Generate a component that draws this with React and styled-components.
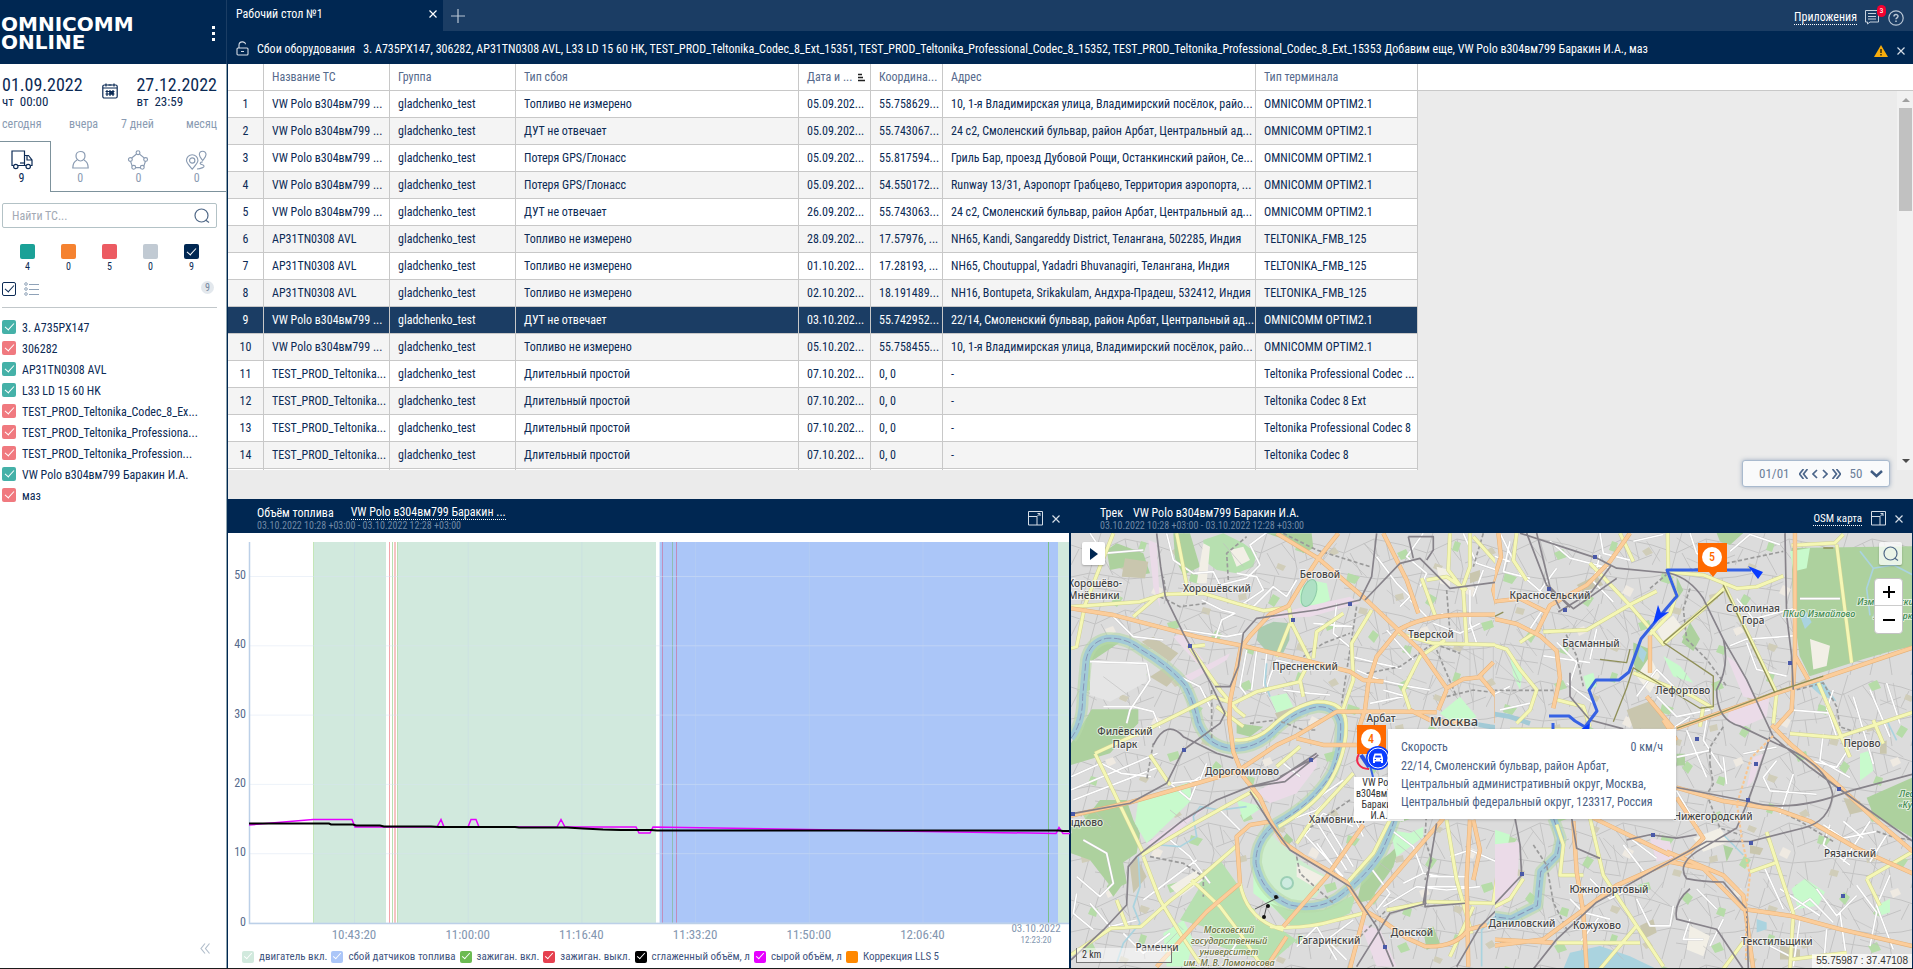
import { useState } from "react";
import styled, { createGlobalStyle, css } from "styled-components";

const GlobalStyle = createGlobalStyle`
    :root {
        --navy: #002752;
        --navy-light: #1b3d64;
        --text: #0b2a55;
        --muted: #8a9bb2;
        --slate: #566a8c;
        --line: #c8c8c8;
    }

    * {
        box-sizing: border-box;
    }

    body {
        margin: 0;
        background-color: #ffffff;
        color: var(--text);
        font-family: "Roboto Condensed", "Liberation Sans", sans-serif;
        font-size: 12px;
        line-height: 16px;
    }

    button, input, select {
        font: inherit;
        color: inherit;
        margin: 0;
        padding: 0;
    }

    button {
        border: none;
        background: none;
        cursor: pointer;
    }

    svg {
        display: block;
        flex: none;
    }
`;

/* ---------- layout ---------- */

const Page = styled.div`
    display: grid;
    grid-template-columns: 228px minmax(0, 1fr);
    height: 100vh;
    border-bottom: 1px solid #1c1c1c;
`;

const Main = styled.main`
    display: flex;
    flex-direction: column;
    min-width: 0;
    min-height: 0;
`;

const Workspace = styled.div`
    flex: 1;
    display: grid;
    grid-template-rows: 468fr 469fr;
    min-height: 0;
`;

const BottomRow = styled.div`
    display: grid;
    grid-template-columns: minmax(0, 1fr) minmax(0, 1fr);
    gap: 2px;
    padding-right: 1px;
    background-color: var(--navy);
    min-height: 0;
`;

/* ---------- sidebar ---------- */

const Sidebar = styled.aside`
    display: flex;
    flex-direction: column;
    border-right: 1px solid var(--navy);
    box-shadow: inset -1px 0 0 #8ea3ad;
`;

const Brand = styled.header`
    display: flex;
    align-items: center;
    justify-content: space-between;
    height: 64px;
    padding: 2px 6px 0 1px;
    background-color: var(--navy);
    border-right: 1px solid var(--navy-light);
    color: #ffffff;
`;

const BrandName = styled.h1`
    margin: 0;
    font-family: "DejaVu Sans", sans-serif;
    font-size: 20px;
    line-height: 18px;
    font-weight: 700;
`;

const MenuButton = styled.button`
    padding: 4px;
`;

const Period = styled.div`
    display: flex;
    justify-content: space-between;
    align-items: flex-start;
    padding: 11px 10px 0 2px;
`;

const PeriodDate = styled.button`
    font-size: 18px;
    line-height: 20px;
    text-align: left;

    & span {
        display: block;
        font-size: 13px;
        line-height: 14px;
    }
`;

const CalendarButton = styled.button`
    margin-top: 8px;
`;

const QuickPeriods = styled.div`
    display: grid;
    grid-template-columns: 67px 52px 1fr auto;
    justify-items: start;
    padding: 7px 10px 9px 2px;
    color: var(--muted);
    line-height: 16px;
`;

const Tabs = styled.div`
    display: grid;
    grid-template-columns: 51px repeat(3, 1fr);
    height: 51px;
    margin-right: 1px;
`;

const Tab = styled.button`
    display: flex;
    flex-direction: column;
    align-items: center;
    padding-top: 9px;
    color: var(--muted);
    border-bottom: 1px solid #7d929c;

    ${(p) => p.$active && css`
        padding: 8px 7px 0 0;
        color: var(--text);
        border-top: 1px solid #7d929c;
        border-right: 1px solid #7d929c;
        border-bottom: none;
    `}
`;

const SearchBox = styled.label`
    display: flex;
    align-items: center;
    height: 25px;
    margin: 11px 10px 16px 2px;
    padding: 0 6px 0 9px;
    border: 1px solid #b3c2c6;
    border-radius: 2px;
    color: #4f6887;

    & input {
        flex: 1;
        min-width: 0;
        border: none;
        outline: none;
        background: none;
    }

    & input::placeholder {
        color: #a3aab5;
    }
`;

const Statuses = styled.div`
    display: flex;
    justify-content: space-between;
    padding: 0 28px 0 20px;
`;

const Status = styled.label`
    display: flex;
    flex-direction: column;
    align-items: center;
    width: 15px;
    font-size: 10px;
    line-height: 16px;
`;

const Check = styled.input`
    appearance: none;
    flex: none;
    position: relative;
    width: ${(p) => p.$size || 14}px;
    height: ${(p) => p.$size || 14}px;
    border-radius: 2px;
    border: ${(p) => (p.$outlined ? "1px solid var(--text)" : "none")};
    background-color: ${(p) => p.$color};

    &:checked::after {
        content: "";
        position: absolute;
        inset: 0;
        margin: auto;
        top: -3px;
        width: ${(p) => (p.$size === 12 ? 3 : 4)}px;
        height: ${(p) => (p.$size === 12 ? 7 : 8)}px;
        border: solid ${(p) => (p.$outlined ? "var(--text)" : "#ffffff")};
        border-width: 0 1px 1px 0;
        transform: rotate(42deg);
    }
`;

const ListTools = styled.div`
    display: flex;
    align-items: center;
    gap: 8px;
    margin: 7px 10px 0 2px;
    padding-bottom: 11px;
    border-bottom: 1px solid #c1c7ca;
`;

const Total = styled.span`
    margin: -3px 3px 0 auto;
    width: 13px;
    height: 13px;
    border-radius: 50%;
    background-color: #e3e8ed;
    color: #7487a0;
    font-size: 10px;
    line-height: 13px;
    text-align: center;
`;

const Vehicles = styled.ul`
    list-style: none;
    margin: 0;
    padding: 8px 10px 0 2px;
    flex: 1;
`;

const Vehicle = styled.li`
    & label {
        display: flex;
        align-items: center;
        gap: 6px;
        height: 21px;
        white-space: nowrap;
    }

    & span {
        padding-top: 2px;
    }
`;

const Collapse = styled.button`
    align-self: flex-end;
    margin: 0 17px 14px 0;
    color: #b3bfcc;
`;

/* ---------- desktop tabs ---------- */

const TabBar = styled.div`
    display: flex;
    align-items: center;
    height: 31px;
    background-color: var(--navy-light);
    color: #ffffff;
`;

const DesktopTab = styled.div`
    display: flex;
    align-items: center;
    justify-content: space-between;
    align-self: stretch;
    width: 215px;
    padding: 0 6px 4px 8px;
    background-color: var(--navy);
`;

const AddButton = styled.button`
    margin-left: 8px;
    color: #b9c6d4;
`;

const TopTools = styled.div`
    display: flex;
    align-items: center;
    gap: 8px;
    margin-left: auto;
    padding: 4px 9px 0 0;
`;

const DottedLink = styled.a`
    color: #ffffff;
    font-size: ${(p) => (p.$small ? 11 : 12)}px;
    line-height: 13px;
    text-decoration: none;
    border-bottom: 1px dotted #ffffff;
`;

const Messages = styled.button`
    position: relative;
    color: #c5d0dc;
`;

const Badge = styled.span`
    position: absolute;
    top: -5px;
    right: -6px;
    width: 9px;
    height: 12px;
    border-radius: 5px;
    background-color: #f4002f;
    color: #ffffff;
    font-size: 8px;
    line-height: 12px;
    text-align: center;
`;

/* ---------- widgets ---------- */

const Widget = styled.section`
    display: flex;
    flex-direction: column;
    min-width: 0;
    min-height: 0;
    background-color: ${(p) => p.$background || "#ffffff"};
`;

const WidgetHeader = styled.header`
    display: flex;
    align-items: center;
    gap: 8px;
    height: ${(p) => p.$height}px;
    padding: ${(p) => p.$padding};
    background-color: var(--navy);
    color: #ffffff;
    white-space: nowrap;
`;

const WidgetName = styled.h2`
    margin: 0;
    font-size: 12px;
    line-height: 16px;
    font-weight: 400;
`;

const WidgetTools = styled.div`
    display: flex;
    align-items: center;
    gap: 9px;
    margin-left: auto;
    padding-top: 5px;
    color: #d5dde6;
`;

const TitleBlock = styled.div`
    padding-top: 6px;
`;

const TitleLine = styled.div`
    display: flex;
    align-items: center;
    gap: ${(p) => p.$gap}px;
    height: 14px;
`;

const Interval = styled.div`
    color: #7089a5;
    font-size: 10px;
    line-height: 12px;
`;

const TableArea = styled.div`
    position: relative;
    flex: 1;
    min-height: 0;
    overflow: hidden;
`;

const Table = styled.table`
    width: 100%;
    table-layout: fixed;
    border-collapse: separate;
    border-spacing: 0;

    & th, & td {
        height: 27px;
        padding: 0 0 0 8px;
        border-right: 1px solid var(--line);
        border-bottom: 1px solid var(--line);
        text-align: left;
        font-weight: 400;
        white-space: nowrap;
        overflow: hidden;
    }

    & th {
        background-color: #ffffff;
        color: var(--slate);
    }

    & th:first-child, & td:first-child {
        padding: 0;
        text-align: center;
    }

    & th:last-child {
        border-right: none;
    }

    & td:last-child {
        border: none;
        background-color: #ebebeb;
    }
`;

const Row = styled.tr`
    background-color: ${(p) => (p.$striped ? "#f4f4f4" : "#ffffff")};

    ${(p) => p.$selected && css`
        background-color: var(--navy-light);
        color: #ffffff;
    `}
`;

const SortHead = styled.div`
    display: flex;
    align-items: center;
    gap: 6px;
`;

const Scrollbar = styled.div`
    position: absolute;
    top: 27px;
    right: 0;
    bottom: 0;
    width: 16px;
    display: flex;
    flex-direction: column;
    align-items: center;
    padding: 7px 1px 7px 2px;
    background-color: #f1f1f1;
    color: #4d4d4d;
`;

const Thumb = styled.div`
    width: 13px;
    height: 103px;
    margin: 6px 0 auto;
    background-color: #c1c1c1;
`;

const TableFooter = styled.footer`
    position: relative;
    height: 29px;
    background-color: #ebebeb;
`;

const Pager = styled.div`
    position: absolute;
    right: 23px;
    bottom: 12px;
    display: flex;
    align-items: center;
    width: 148px;
    height: 27px;
    padding: 0 6px 0 16px;
    border: 1px solid #a9bace;
    border-radius: 3px;
    background-color: #f9fafb;
    box-shadow: 0 0 4px rgba(80, 110, 150, 0.5);
    color: #6c7f99;
    font-size: 13px;
`;

const PagerArrows = styled.div`
    display: flex;
    gap: 4px;
    margin: 1px 9px 0 9px;
    color: #4a658a;
`;

const PageSize = styled.label`
    display: flex;
    align-items: center;
    flex: 1;

    & select {
        appearance: none;
        flex: 1;
        border: none;
        background: none;
        outline: none;
    }
`;

/* ---------- chart ---------- */

const ChartSvg = styled.svg`
    flex: 1;
    width: 100%;
    min-height: 0;
    overflow: visible;
    font-family: "Roboto Condensed", sans-serif;
`;

const Legend = styled.div`
    display: flex;
    align-items: center;
    gap: 4px;
    height: 25px;
    padding: 2px 0 0 14px;
    overflow: hidden;
    white-space: nowrap;
    color: #3f5580;
    font-size: 11px;

    & label {
        display: flex;
        align-items: center;
        gap: 5px;
    }
`;

/* ---------- map ---------- */

const MapArea = styled.div`
    position: relative;
    flex: 1;
    min-height: 0;
    overflow: hidden;
    background-color: #dcdcdc;
`;

const MapSvg = styled.svg`
    width: 100%;
    height: 100%;
    font-family: "Noto Sans", sans-serif;
`;

const MapButton = styled.button`
    position: absolute;
    top: 9px;
    left: ${(p) => p.$left || "auto"};
    right: ${(p) => p.$right || "auto"};
    display: flex;
    align-items: center;
    justify-content: center;
    width: 23px;
    height: 23px;
    border-radius: 2px;
    background-color: rgba(255, 255, 255, ${(p) => p.$alpha || 1});
    box-shadow: 0 1px 2px rgba(0, 0, 0, 0.25);
    color: var(--navy);
`;

const ZoomControl = styled.div`
    position: absolute;
    top: 45px;
    right: 9px;
    border: 1px solid #c3c3c3;
    border-radius: 4px;
    background-color: #ffffff;

    & button {
        display: flex;
        align-items: center;
        justify-content: center;
        width: 27px;
        height: 27px;
        color: #000000;
    }

    & button:first-child {
        border-bottom: 1px solid #cccccc;
    }
`;

const MapScale = styled.div`
    position: absolute;
    left: 5px;
    bottom: 5px;
    width: 96px;
    height: 15px;
    padding-left: 5px;
    border: 1px solid #777777;
    border-top: none;
    background-color: rgba(255, 255, 255, 0.5);
    color: #333333;
    font-size: 10px;
    line-height: 13px;
`;

const Coordinates = styled.div`
    position: absolute;
    right: 0;
    bottom: 0;
    padding: 0 4px;
    background-color: rgba(255, 255, 255, 0.7);
    color: #333333;
    font-family: "Liberation Sans", sans-serif;
    font-size: 10px;
    line-height: 14px;
`;

const VehicleTag = styled.div`
    position: absolute;
    left: 283px;
    top: 244px;
    width: 50px;
    padding: 0;
    background-color: #ffffff;
    color: #333333;
    font-size: 10px;
    line-height: 11px;
    text-align: center;
`;

const Popup = styled.div`
    position: absolute;
    left: 317px;
    top: 196px;
    width: 288px;
    height: 90px;
    padding: 9px 13px 0 13px;
    background-color: #ffffff;
    box-shadow: 0 1px 3px rgba(0, 0, 0, 0.2);
    color: #4b5f85;
    line-height: 18px;

    & p {
        margin: 0;
        white-space: nowrap;
    }
`;

const PopupHead = styled.div`
    display: flex;
    justify-content: space-between;
    margin-bottom: 1px;
`;

/* ---------- data ---------- */

const teal = "#45b1a8";
const red = "#f0797f";

const vehicles = [
    ["3. A735PX147", teal],
    ["306282", red],
    ["AP31TN0308 AVL", teal],
    ["L33 LD 15 60 HK", teal],
    ["TEST_PROD_Teltonika_Codec_8_Ex...", red],
    ["TEST_PROD_Teltonika_Professiona...", red],
    ["TEST_PROD_Teltonika_Profession...", red],
    ["VW Polo в304вм799 Баракин И.А.", teal],
    ["маз", red],
];

const statuses = [
    ["#1ba197", 4],
    ["#f58230", 0],
    ["#ec5b62", 5],
    ["#c1cad3", 0],
    ["#002752", 9],
];

const columns = [36, 126, 126, 283, 72, 72, 313, 162];

const polo = "VW Polo в304вм799 ...";
const avl = "AP31TN0308 AVL";
const testProd = "TEST_PROD_Teltonika...";
const noFuel = "Топливо не измерено";
const noSensor = "ДУТ не отвечает";
const noGps = "Потеря GPS/Глонасс";
const idle = "Длительный простой";

const rows = [
    [polo, noFuel, "05.09.202...", "55.758629...", "10, 1-я Владимирская улица, Владимирский посёлок, райо...", "OMNICOMM OPTIM2.1"],
    [polo, noSensor, "05.09.202...", "55.743067...", "24 с2, Смоленский бульвар, район Арбат, Центральный ад...", "OMNICOMM OPTIM2.1"],
    [polo, noGps, "05.09.202...", "55.817594...", "Гриль Бар, проезд Дубовой Рощи, Останкинский район, Се...", "OMNICOMM OPTIM2.1"],
    [polo, noGps, "05.09.202...", "54.550172...", "Runway 13/31, Аэропорт Грабцево, Территория аэропорта, ...", "OMNICOMM OPTIM2.1"],
    [polo, noSensor, "26.09.202...", "55.743063...", "24 с2, Смоленский бульвар, район Арбат, Центральный ад...", "OMNICOMM OPTIM2.1"],
    [avl, noFuel, "28.09.202...", "17.57976, ...", "NH65, Kandi, Sangareddy District, Телангана, 502285, Индия", "TELTONIKA_FMB_125"],
    [avl, noFuel, "01.10.202...", "17.28193, ...", "NH65, Choutuppal, Yadadri Bhuvanagiri, Телангана, Индия", "TELTONIKA_FMB_125"],
    [avl, noFuel, "02.10.202...", "18.191489...", "NH16, Bontupeta, Srikakulam, Андхра-Прадеш, 532412, Индия", "TELTONIKA_FMB_125"],
    [polo, noSensor, "03.10.202...", "55.742952...", "22/14, Смоленский бульвар, район Арбат, Центральный ад...", "OMNICOMM OPTIM2.1"],
    [polo, noFuel, "05.10.202...", "55.758455...", "10, 1-я Владимирская улица, Владимирский посёлок, райо...", "OMNICOMM OPTIM2.1"],
    [testProd, idle, "07.10.202...", "0, 0", "-", "Teltonika Professional Codec ..."],
    [testProd, idle, "07.10.202...", "0, 0", "-", "Teltonika Codec 8 Ext"],
    [testProd, idle, "07.10.202...", "0, 0", "-", "Teltonika Professional Codec 8"],
    [testProd, idle, "07.10.202...", "0, 0", "-", "Teltonika Codec 8"],
];

const legend = [
    ["двигатель вкл.", "#d1e9dd", true],
    ["сбой датчиков топлива", "#abc6f8", true],
    ["зажиган. вкл.", "#6cbb52", true],
    ["зажиган. выкл.", "#e5404f", true],
    ["сглаженный объём, л", "#000000", true],
    ["сырой объём, л", "#e600ff", true],
    ["Коррекция LLS 5", "#ff8800", false],
];

/* ---------- icons ---------- */

const CloseIcon = ({ size = 8 }) => (
    <svg width={size} height={size} viewBox="0 0 8 8" fill="none" stroke="currentColor" strokeWidth="1.2">
        <path d="M.5.5l7 7M7.5.5l-7 7" />
    </svg>
);

const ExpandIcon = () => (
    <svg width="15" height="15" viewBox="0 0 15 15" fill="none" stroke="currentColor">
        <path d="M.5 .5h14v13.500h-14zM.5 5.500h8.500v8.500" />
        <path d="M9 5.500l3-3M9.500 2.500h2.500v2.500" />
    </svg>
);

const SearchIcon = ({ size = 16 }) => (
    <svg width={size} height={size} viewBox="0 0 16 16" fill="none" stroke="#4f6887" strokeWidth="1.2">
        <circle cx="7.500" cy="7.500" r="6.500" />
        <path d="M11.500 12l3.500 2.500" />
    </svg>
);

const CalendarIcon = () => (
    <svg width="16" height="16" viewBox="0 0 16 16" fill="none" stroke="currentColor" strokeWidth="1.200">
        <rect x=".8" y="2" width="14.400" height="13" rx="1.500" />
        <path d="M4 .5v3M12 .5v3M1 5h14M6.500 2h3" />
        <path d="M3.500 8.500h9M3.500 11h9M5 7v6M8 7v6M11 7v6" />
        <path d="M8 8.500h3V11H8z" fill="currentColor" />
    </svg>
);

const TruckIcon = () => (
    <svg width="22" height="20" viewBox="0 0 22 20" fill="none" stroke="currentColor" strokeWidth="1.200">
        <path d="M2.500 15.500H1V1h12.500v14.500H7" />
        <path d="M13.500 5.500h4l3.500 4.500v5.500h-1.500M13.500 15.500h1.500M16 6v4h5" />
        <circle cx="4.800" cy="16.500" r="2.200" />
        <circle cx="17.200" cy="16.500" r="2.200" />
        <path d="M9 13h4" />
    </svg>
);

const PersonIcon = () => (
    <svg width="17" height="20" viewBox="0 0 17 20" fill="none" stroke="currentColor" strokeWidth="1.200">
        <path d="M8.500 1.500c3 0 4.500 2 4.500 4.500s-1.800 5-4.500 5S4 8.500 4 6s1.500-4.500 4.500-4.500z" />
        <path d="M5 10c-3 1.500-4.200 4-4.200 8h15.400c0-4-1.200-6.500-4.200-8" />
    </svg>
);

const NetworkIcon = () => (
    <svg width="22" height="20" viewBox="0 0 22 21" fill="#ffffff" stroke="currentColor" strokeWidth="1.200">
        <path d="M11 3l8.500 7-3 8.500h-11L2.500 10z" />
        <circle cx="11" cy="2.800" r="2" />
        <circle cx="19" cy="10" r="2" />
        <circle cx="3" cy="10" r="2" />
        <circle cx="6.500" cy="18.200" r="2" />
        <circle cx="15.500" cy="18.200" r="2" />
    </svg>
);

const RouteIcon = () => (
    <svg width="23" height="20" viewBox="0 0 23 21" fill="none" stroke="currentColor" strokeWidth="1.200">
        <path d="M7 20C3.500 16 1 13.500 1 11a6 6 0 0 1 12 0c0 2.500-2.500 5-6 9z" />
        <circle cx="7" cy="11" r="2.800" />
        <path d="M18 11c-2-2.500-3.500-4-3.500-6.200a3.500 3.500 0 0 1 7 0C21.500 7 20 8.500 18 11z" />
        <path d="M18 12.500c-3 .5-3.500 2-1 2.800s3.500 2 1 3.200-4 1.500-6 1.500" />
    </svg>
);

const ListIcon = () => (
    <svg width="15" height="14" viewBox="0 0 15 14" fill="none" stroke="#8fa2b8">
        <circle cx="2" cy="2" r="1.300" />
        <circle cx="2" cy="7" r="1.300" />
        <circle cx="2" cy="12" r="1.300" />
        <path d="M5 2.500h10M5 7.500h10M5 12.500h10" />
    </svg>
);

const LockIcon = () => (
    <svg width="13" height="15" viewBox="0 0 13 15" fill="none" stroke="#d5dde6" strokeWidth="1.100">
        <rect x="1" y="7" width="11" height="7" rx="1" />
        <path d="M3 7V4c0-4 6.500-4 6.500-.8M5 10.500h3" />
    </svg>
);

const DotsIcon = () => (
    <svg width="4" height="17" viewBox="0 0 4 17" fill="currentColor">
        <path d="M0 1h3v3H0zM0 7h3v3H0zM0 13h3v3H0z" />
    </svg>
);

const Chevrons = ({ d, wide }) => (
    <svg width={wide ? 9 : 6} height="10" viewBox={wide ? "0 0 9 10" : "0 0 6 10"} fill="none" stroke="currentColor" strokeWidth="1.700">
        <path d={d} />
    </svg>
);

/* ---------- parts ---------- */

const SidePanel = () => {
    const [query, setQuery] = useState("");

    return (
        <Sidebar>
            <Brand>
                <BrandName>OMNICOMM<br />ONLINE</BrandName>
                <MenuButton aria-label="Меню"><DotsIcon /></MenuButton>
            </Brand>

            <Period>
                <PeriodDate>01.09.2022<span>чт&nbsp; 00:00</span></PeriodDate>
                <CalendarButton aria-label="Календарь"><CalendarIcon /></CalendarButton>
                <PeriodDate>27.12.2022<span>вт&nbsp; 23:59</span></PeriodDate>
            </Period>
            <QuickPeriods>
                <button>сегодня</button>
                <button>вчера</button>
                <button>7 дней</button>
                <button>месяц</button>
            </QuickPeriods>

            <Tabs>
                <Tab $active><TruckIcon />9</Tab>
                <Tab><PersonIcon />0</Tab>
                <Tab><NetworkIcon />0</Tab>
                <Tab><RouteIcon />0</Tab>
            </Tabs>

            <SearchBox>
                <input
                    aria-label="Найти ТС"
                    placeholder="Найти ТС..."
                    value={query}
                    onChange={(e) => setQuery(e.target.value)}
                />
                <SearchIcon />
            </SearchBox>

            <Statuses>
                {statuses.map(([color, count], i) => (
                    <Status key={color}>
                        <Check type="checkbox" $size={15} $color={color} defaultChecked={i === 4} />
                        {count}
                    </Status>
                ))}
            </Statuses>

            <ListTools>
                <Check type="checkbox" aria-label="Выбрать все" $outlined $color="#ffffff" defaultChecked />
                <ListIcon />
                <Total>9</Total>
            </ListTools>

            <Vehicles>
                {vehicles.map(([name, color]) => (
                    <Vehicle key={name}>
                        <label>
                            <Check type="checkbox" $color={color} defaultChecked />
                            <span>{name}</span>
                        </label>
                    </Vehicle>
                ))}
            </Vehicles>

            <Collapse aria-label="Свернуть">
                <svg width="10" height="11" viewBox="0 0 10 11" fill="none" stroke="currentColor" strokeWidth="1.200">
                    <path d="M5 .5l-4 5 4 5M9.500 .5l-4 5 4 5" />
                </svg>
            </Collapse>
        </Sidebar>
    );
};

const DesktopTabs = () => (
    <TabBar>
        <DesktopTab>
            Рабочий стол №1
            <button aria-label="Закрыть вкладку"><CloseIcon /></button>
        </DesktopTab>
        <AddButton aria-label="Добавить вкладку">
            <svg width="14" height="14" viewBox="0 0 14 14" stroke="currentColor" strokeWidth="1.200">
                <path d="M7 0v14M0 7h14" />
            </svg>
        </AddButton>
        <TopTools>
            <DottedLink href="#apps">Приложения</DottedLink>
            <Messages aria-label="Сообщения">
                <svg width="15" height="15" viewBox="0 0 15 15" fill="none" stroke="currentColor">
                    <path d="M.500 .500h13v11.500H5L2.500 14v-2h-2z" />
                    <path d="M3 3.500h8M3 6.500h8M3 9h8" />
                </svg>
                <Badge>3</Badge>
            </Messages>
            <button aria-label="Справка">
                <svg width="16" height="16" viewBox="0 0 16 16" fill="none" stroke="#b9c6d4" strokeWidth="1.200">
                    <circle cx="8" cy="8" r="7.200" />
                    <path d="M6 6.500C6 4 10 4 10 6.300 10 7.800 8 7.800 8 9.300M8 10.500v1.400" strokeWidth="1.500" />
                </svg>
            </button>
        </TopTools>
    </TabBar>
);

const FailuresTable = () => (
    <Widget $background="#ebebeb">
        <WidgetHeader $height={33} $padding="2px 8px 0 8px">
            <LockIcon />
            <WidgetName>Сбои оборудования</WidgetName>
            <span>3. A735PX147, 306282, AP31TN0308 AVL, L33 LD 15 60 HK, TEST_PROD_Teltonika_Codec_8_Ext_15351, TEST_PROD_Teltonika_Professional_Codec_8_15352, TEST_PROD_Teltonika_Professional_Codec_8_Ext_15353 Добавим еще, VW Polo в304вм799 Баракин И.А., маз</span>
            <WidgetTools>
                <svg width="14" height="12" viewBox="0 0 14 12">
                    <path d="M7 0l7 12H0z" fill="#f9ad0b" />
                    <path d="M7 4v4M7 9v1.500" stroke="#3a2f10" strokeWidth="1.500" />
                </svg>
                <button aria-label="Закрыть"><CloseIcon /></button>
            </WidgetTools>
        </WidgetHeader>

        <TableArea>
            <Table>
                <colgroup>
                    {columns.map((width, i) => <col key={i} width={width} />)}
                    <col />
                </colgroup>
                <thead>
                    <tr>
                        <th />
                        <th>Название ТС</th>
                        <th>Группа</th>
                        <th>Тип сбоя</th>
                        <th>
                            <SortHead>
                                Дата и ...
                                <svg width="8" height="9" viewBox="0 0 8 9" stroke="#222222" strokeWidth="1.500">
                                    <path d="M0 1.500h4M0 4.500h5M0 7.500h7" />
                                </svg>
                            </SortHead>
                        </th>
                        <th>Координа...</th>
                        <th>Адрес</th>
                        <th>Тип терминала</th>
                        <th />
                    </tr>
                </thead>
                <tbody>
                    {rows.map(([name, failure, date, coords, address, terminal], i) => (
                        <Row key={i} $striped={i % 2 === 1} $selected={i === 8}>
                            <td>{i + 1}</td>
                            <td>{name}</td>
                            <td>gladchenko_test</td>
                            <td>{failure}</td>
                            <td>{date}</td>
                            <td>{coords}</td>
                            <td>{address}</td>
                            <td>{terminal}</td>
                            <td />
                        </Row>
                    ))}
                    <Row>
                        {[...columns, 0].map((_, i) => <td key={i} />)}
                    </Row>
                </tbody>
            </Table>
            <Scrollbar>
                <svg width="8" height="4" viewBox="0 0 8 4" fill="#a0a0a0"><path d="M4 0l4 4H0z" /></svg>
                <Thumb />
                <svg width="8" height="4" viewBox="0 0 8 4" fill="currentColor"><path d="M4 4L0 0h8z" /></svg>
            </Scrollbar>
        </TableArea>

        <TableFooter>
            <Pager>
                01/01
                <PagerArrows>
                    <button aria-label="В начало"><Chevrons wide d="M4.500 0l-4 5 4 5M8.500 0l-4 5 4 5" /></button>
                    <button aria-label="Назад"><Chevrons d="M5 1L1 5l4 4" /></button>
                    <button aria-label="Вперёд"><Chevrons d="M1 1l4 4-4 4" /></button>
                    <button aria-label="В конец"><Chevrons wide d="M.500 0l4 5-4 5M4.500 0l4 5-4 5" /></button>
                </PagerArrows>
                <PageSize>
                    <select aria-label="Строк на странице" defaultValue="50">
                        <option>50</option>
                    </select>
                    <svg width="13" height="8" viewBox="0 0 13 8" fill="none" stroke="#3f5b82" strokeWidth="2.500">
                        <path d="M1 1l5.500 5L12 1" />
                    </svg>
                </PageSize>
            </Pager>
        </TableFooter>
    </Widget>
);

const plot = { left: 21, right: 841, top: 9, bottom: 390 };

const bands = [
    { x: 85, width: 73, color: "#d1e9dd" },
    { x: 169, width: 259, color: "#d1e9dd" },
    { x: 431, width: 1, color: "#dfe9fb" },
    { x: 432, width: 398, color: "#abc6f8" },
    { x: 830, width: 11, color: "#d1e9dd" },
];

const events = [
    [85, "#c4e6b8"],
    [161, "#f3a3a8"],
    [164, "#b6dfb0"],
    [166, "#f6c3c3"],
    [167, "#f6c3c3"],
    [169, "#b9deb2"],
    [434, "#c08fbd"],
    [444, "#8fbdb3"],
    [448, "#c18cb9"],
    [820, "#7cc08a"],
];

const FuelChart = () => (
    <Widget>
        <WidgetHeader $height={34} $padding="0 9px 0 29px">
            <TitleBlock>
                <TitleLine $gap={17}>
                    <WidgetName>Объём топлива</WidgetName>
                    <DottedLink href="#vehicle">VW Polo в304вм799 Баракин ...</DottedLink>
                </TitleLine>
                <Interval>03.10.2022 10:28 +03:00 - 03.10.2022 12:28 +03:00</Interval>
            </TitleBlock>
            <WidgetTools>
                <button aria-label="Развернуть"><ExpandIcon /></button>
                <button aria-label="Закрыть"><CloseIcon /></button>
            </WidgetTools>
        </WidgetHeader>

        <ChartSvg viewBox="0 0 841 410" preserveAspectRatio="xMinYMin meet">
            {bands.map((b) => (
                <rect key={b.x} x={b.x} y={plot.top} width={b.width} height={plot.bottom - plot.top} fill={b.color} />
            ))}
            {events.map(([x, color]) => (
                <rect key={x} x={x} y={plot.top} width="1" height={plot.bottom - plot.top} fill={color} />
            ))}
            {[50, 40, 30, 20, 10, 0].map((value, i) => (
                <g key={value}>
                    <path d={`M${plot.left} ${43.5 + i * 69.3}H${plot.right}`} stroke="#d8e2f2" strokeOpacity=".45" />
                    <text x="18" y={46 + i * 69.3} fontSize="12" fill="#566a8c" textAnchor="end">{value}</text>
                </g>
            ))}
            {["10:43:20", "11:00:00", "11:16:40", "11:33:20", "11:50:00", "12:06:40"].map((time, i) => (
                <g key={time}>
                    <path d={`M${126.5 + i * 113.7} ${plot.top}V${plot.bottom}`} stroke="#c2d3ea" strokeOpacity=".35" />
                    <text x={126 + i * 113.7} y="406" fontSize="13" fill="#8396b0" textAnchor="middle">{time}</text>
                </g>
            ))}
            <text x="808" y="399" fontSize="11" fill="#8396b0" textAnchor="middle">03.10.2022</text>
            <text x="808" y="410" fontSize="9" fill="#8396b0" textAnchor="middle">12:23:20</text>
            <path d="M21.500 9V390.500H841" fill="none" stroke="#bcd0e8" strokeWidth="1.500" />
            <path
                d="M21 292l64-5.500h39l3 7.500h82l4-7.500 3 7.500h24l3-7.500h5l3 7.500h78l4-7.500 4 7.500h71l3 6h11l3-6 403 6.500 3-6 4 6h7"
                fill="none"
                stroke="#e600ff"
                strokeWidth="1.500"
            />
            <path
                d="M21 290.500h80l2 1h22l3 1h24l4 1h47l8 .5h76l4 .5h48l16 1 20 1 18 .5h30l6 .5h402l4 .5h6"
                fill="none"
                stroke="#000000"
                strokeWidth="2"
            />
        </ChartSvg>

        <Legend>
            {legend.map(([name, color, checked]) => (
                <label key={name}>
                    <Check type="checkbox" $size={12} $color={color} defaultChecked={checked} />
                    {name}
                </label>
            ))}
        </Legend>
    </Widget>
);

/* The map is drawn as two sheets, west and east, on a grid three times finer than the view. */

const west = {
    areas: [
        ["#add19e", "M310 130h50l30 100-50 25-25-50zM590 130h135l5 45-30 15-50-40zM110 180l30-20 80 30 20 60-60 10-10-30-50 10zM65 658h140v42l-40 40-45 50-117 35v-65l37-60zM90 930h80l20 60 20 40-10 60-60 40-60-50-70-10-7-60 40-20zM3 1030l87 10 70 80 10 60-40 20-70-90-57-20zM880 1150l80-60 30-30-20 70-70 100-40 10zM1060 1320l30-10 20 50-40 20zM500 700l80 10-40 30-40-10zM40 520l40-60 80-10-90 60-20 100zM650 1030l20 20-20 20-15-20zM140 1150l20 30-30 40-20-30z"],
        ["#c8facc", "M690 300l30-30 50 10 10 50-40 20-50-10zM205 930l155-55 5 55-135 130-35-60zM600 620l50-10 20 40-50 20zM1110 670l60-50 50 60-60 30zM550 1120l40 80 60 50-20 20-80-60zM960 1020l60 10 40-20v30l-80 60zM980 860l20 40-30 30zM280 1330l60-40 30 60-20 80h-60zM500 930l80 20-60 40z"],
        ["#b7e0b0", "M400 150l60-20 60 30 40 30-10 40-50 20-60-10-40-30zM380 1160l70-50 50 70 60 110 60 20 60 40-80 70-150-50-50-60-70-20 60-100zM600 1240l60 20h100l100-50-20 60-90 40-90-5z"],
        ["#cfeed0", "M590 1020l30 30 70 60 80 50-30 60-60 20-80-40-40-70v-70z"],
        ["#aacbaf", "M565 415l45-20 50 5-2 50-18 38-50-4-30-34z"],
        ["#c9c6ae", "M165 205l70 10-10 50-70-5zM215 455l35-15 75 50-25 25zM240 560l40-25 40 25-30 30zM180 1130l20-30 30 60-40 50zM615 670l60-20 20 30-60 30zM1200 250l30-10v30l-30 10z"],
        ["#ebdbe8", "M235 150l25 10 10 190-20-60zM560 400l60-30 220-50 30 20-150 40-110 5zM560 905l60-35 120-80v40l-60 80-80 30zM230 1060l120-80 60-30-150 130zM870 1300l60 20 50 110h-60zM310 440l30-10 60 80-20 10zM340 560l140-70-10 20-120 70z"],
        ["#f2efe6", "M680 1120l80 40-30 30-50-30zM480 180l40-10 20 40-40 20zM1100 230l40 10v50l-30-10zM300 1190l80-50 20 30-70 50zM380 280l20-120 20 10-10 110z"],
        ["#e5e5e5", "M60 510l170 5v60l-110 60-60-20z"],
    ],
    banks: "M3 745Q38 700 38 620L48 510Q60 455 110 445 165 440 215 480 300 530 345 585 370 630 385 700 410 765 480 775 560 780 620 715 680 660 745 650 800 650 812 700 815 780 785 850 730 940 620 1000 555 1050 558 1120 575 1210 660 1245 740 1262 800 1225 890 1160 935 1085 960 1030 975 985",
    river: "M1200 700l60 10 40 5",
    streams: "M220 1095l50-30 60 5 50-30-10-60 20-30 60 10 80-10M205 1100l5 90-20 60 20 50-50 60-20 60M1235 1430v-110l60-60M590 520l-5 60 15 40",
    minor: "M60 515l170 5 10 50-60 90-10 40M100 650h90l60 15 20 50M290 130l20 80 60 40 60-5 20 40 80-20 40-40-30-60 80-60M500 250l60 10 20 40-60 40 30 10 60-60 40 30 30-50M395 330l60 30 40 10-40 20-20 60M530 480l-20 110 20 25M560 480l-15 120M590 490l-10 100M700 530l-80-20-20 50-15 50M640 600l80 10 60 5M730 400l120 10M800 340l-10 90 60 50M845 500l80 20 70 15M920 200l60 80 40 40-30 30M860 540l70 30 90 20 60 10M700 1040l60-70 90 40M740 1060l80 110M770 1000l80 130M700 1030l120 130M730 980l100 160M850 980l30 60M3 860l90-40 60 30 90 10M3 900l260-110M10 930l260-100M240 800l60 80 60 50 20-50M300 880l90-10 20-50M60 130l40 60 120-10M130 380l60 60 90 10M330 560l60 30 30 60M340 420l130 20 50-10M20 1160l70 60 40-40-20-90-70-40M60 1240l60 70 80-20M20 1210l-10 60 60 50M160 1330l60 60 80-60M220 1230l80-60 80-60M300 1050l60 50 60 80M640 820l50 40M850 1290l-80 60 60 60M900 1130l60 80-40 50M950 1010l80 60 30 80M1000 1180l60-30 50 10M940 1250l100-60 90 10 100-10M1070 1190h120M1080 1160h110M1140 1100l60-20 90 40M1020 330l60 60 40-20M1060 130l-50 70 60 50-20 40M1180 130l40 90 60 20M1200 300v100l20 60M1240 240l-30 80M950 420l80 90M1090 400l80 30 60-30M940 600l70 20M900 640l100-20M680 1370l60-60 60 100M520 1330l-40 60M330 900l60-40M450 960l60 60M640 1000l80-60 100-70M660 990l80-30 80-70",
    street: "M940 450l60 60M900 470l90 60M920 520l80 50M950 560v80M1010 560l60 20M1060 500l60 60M1080 480l80 60M1120 460l80 50M1150 460l90 50M1200 470v110M1240 470v90M1270 470v100M1100 560l-40 70M1140 560l-30 80M1180 560l-20 60M1210 580v80M880 160l50 40M830 200l60 60M800 160l-40 50M950 300l70 60M1000 260l80 40M1060 400l-60 90M1110 380v70M1160 380v80M850 590l60 20M830 620h70M720 880l60 60M680 920l70 50M760 830l80 60M930 1120l80 60M980 1060l100 80M1030 1020l50 60M960 1200l80 60M1100 1260v90M1150 1250l10 80M1220 1250l-10 60M570 200l-50 60M460 160l60 70M600 280l-60-30M330 350l80 20M240 320l-60 50M180 400v60M340 480l-40 60M420 400l60 40M540 620l60 30M640 560l40 60M760 570l60 50M730 640l-20 40M300 960l50 40M380 960l-50 40M420 1060l50 60M460 1020l60 80M280 1260l60 60M330 1320l-60 60M70 960l50 50M560 950l30 30M120 240l60 40M40 260l60 30M20 600l60 30M100 560l80 60M400 680l40 40",
    yellow: "M3 350l207-15 70-22 120-3 100 30 80 22 80-10M45 345l45-115 40-100M45 345l-25 125-17 5M320 130l35 180M190 380l70-60M355 465l95 135 50 60 25 20M360 470l45-5M200 735l230-115 60 20 70-35 130-30M495 750q65 5 115-45 65-60 130-70 85-2 88 65 4 80-42 165-40 75-160 145M440 650l80 60M657 350l8 50 25 50 30 60-30 60 10 50M660 400l-40 100M820 370l-50 35-30 20-10 80M905 360l-60 100 5 110-35 100M3 1395l120-80 90-5 90-80 90-70 110-95M220 1100l50 130 60 100 60 90M365 1170l85 80 60 80 60 90M215 1095l150-90 180-100 30 30M600 1310q100 10 200-20l80-20M510 1180q20 110 130 140M830 1180l80-90 50-100M680 1060l60-90 110-120M1125 450l-75 50-50 100 20 60M985 430l105 30 200 5M1290 230l-80-90M1055 265l40 110M1200 130v100l-25 70M1070 270l60-10 60 40M1130 990l30 180 45 160M1070 1235l200 5 20-140M170 1310l-30-80M1140 1400l70-150M950 1260l110-20M620 830l70-60M75 790l145 300M75 790l130-60M300 885l-60-90M1190 460l-10-160-45-60 5-110",
    orange: "M3 355l127 20 250 65 140 28 180 42 140 35 40 25 60 5M620 130l125 75 145 125 95 90 65 60 80 115 50-28 45-5 45-45M805 130l-60 75-55 85-35 58-55 25-60 65-28 37-32 160-2 60 12 90 30 75 50 62 30 70 40 65 60 42 70 40 60 38 50 82 60 35 70 50 55 25q90 5 130-50l55-15M3 977l177-40 200-57 120-35 120-80 60-28 120-72h200l100 2M680 745l80 20h100M985 420q65-38 165-45l140-2M985 420l-65 80-25 80-10 80-20 60M940 130l70 140 35 100M1290 220l-20 80 20 80M885 1265l-45 170M1120 985l-235 275M1200 990l-10 180 5 260M510 1180l-100 85-150 165M510 1180l-10-140 40-35 60-10M640 1310l130-150 110-155M650 1340l-60 90M1105 660l25-60M1020 660l60 30 110 10M1230 560l50 60v80M1210 990l20 90-20 90",
    rail: "M260 130l12 100 14 90 54 110 82 150 43 90-15 30-110 80-50 100-110 60-177 32M920 130l-15 130-35 70-130 30-180 25-40 45-15 100-25 60h-45M740 790l-120 80-80 20-100 40-100 60-140 110-25 30-5 115-70 75-97 90M540 905l60 95 60 80 100 60 80 50 80 120 50 120M885 330l105-110 60-15 90 90 150-20M1015 140h75v40l-20 30M1015 140l15 65M250 765q40-80 90-25l100 50 50 15M1070 1180l-5 70 120-10M1290 1250l-60 60-70 120M745 795l-100 80-100 15M740 800l-110 60M1100 1000l-40 240M860 1430l100-160 110-30",
    dashed: "M250 760l-20 110M640 130l100 50 160 50M475 270l-5-80 60-50M860 350l-20 130-25 160M425 600v150M890 550l100-20 100-70 80 30M1100 480l60 140M540 700l80-10 80 30h40M680 1100l10 50 100 90M240 1100l100 20 60 40v60M840 930l-130 90M1070 960l-5 90 20 60-20 60M270 320l60 30 80-10M290 320l-10-60M700 500l60-40 80-30M1130 620l80-20 80 10M1130 300l10 130M870 1340l80-80M1240 130l-30 100",
    labels: [
        [249, 45, "Беговой"], [146, 59, "Хорошёвский"], [24, 54, "Хорошёво-"], [23, 66, "Мнёвники"], [360, 105, "Тверской"],
        [234, 137, "Пресненский"], [310, 189, "Арбат"], [54, 202, "Филёвский"], [54, 215, "Парк"], [171, 242, "Дорогомилово"],
        [266, 290, "Хамовники"], [4, 293, "Давыдково"], [86, 418, "Раменки"], [258, 411, "Гагаринский"], [341, 403, "Донской"],
    ],
};

const east = {
    areas: [
        ["#add19e", "M905 320l364-5v295l-80 20-70 20-160 50-30-60-20-140zM680 276h80l-40 35-30-10zM1130 1060l139-60v180l-119-70zM600 540l30 50-20 35-35-25zM560 930h25v35h-25zM430 600l50 20-10 60-30 10-10-30zM560 405l20 40-20 30zM700 1200l30 10-20 40z"],
        ["#c8facc", "M1110 930l30-10 10 60-40 30zM520 640l50 30 40 50-60-20zM905 1330l40-30 60 40-20 40-60 10zM1160 1380l40-20v40l-30 10zM280 700l30-10 10 40-30 10zM60 640l40 40-10 60-20-40zM900 330l60-10-10 60-40 10zM0 1150l60 20-10 50-50 10z"],
        ["#ebdbe8", "M720 800l120-45-10 65-70 30-50-20zM710 640l30 20 60 110-40-10zM0 1200l90-10-10 140-50 60-30-10zM480 1180l60 10 10 50-50 10zM790 940l30-10-30 80-20 20z"],
        ["#c9c6ae", "M410 800l80-30 50 86h-110zM1170 900l20-10v40h-20zM450 1440l40-20 10 40-40 20zM1060 1060l50 10 10 30-40 10zM260 430l60-30 20 30-60 20zM780 1200l40 10-10 20-30-5zM870 1500l60 10v30h-60z"],
        ["#f2efe6", "M500 560l50-40 30 40-60 40zM440 700l40-60 30 60-30 50zM610 1180l80-30 30 40-80 30zM960 590l60 20-10 60-40 10zM600 1440l60 30-20 60-50-20z"],
        ["#aad3df", "M240 1520l90-20 90 30 80 38H220zM930 520l20-10 15 30-20 20zM950 720l50-5 40 60-50-20zM800 1420l30 10v20l-30 10zM450 610l20 20-10 30-15-20z"],
    ],
    banks: "M190 1120l22 60-10 50-50 50-10 100-80 40-62-10",
    river: "M0 810l60 10 60 20",
    streams: "M1110 330l40 50 60-10 59 30M1150 380l-20 60 10 80M700 1170l60 60M1190 830l30 60",
    minor: "M30 276l60 120 70 60M180 300l60 50 120 30M200 380l-60 80M330 276l10 60 80 20M430 300l90-20M600 276l20 60 70 30M720 330l60-50 90 30M740 470l50 60 120-30M720 610l50-20 150-10M770 600l30 80 90 20M930 470h120M440 760l60-80 60 60M500 760l60 60 100-20M540 860l60-40M590 860l60 140M650 830l-10 60 60 90M560 940l100-20M760 930l100-20M700 940l10 80M860 950l-40 50 20 40 140 10M910 990l-40 120M1000 760l40 120M1090 760l60 200M1140 740l60 140M1190 720l40 120M1030 740l-20 60M900 800l130 10M1000 870l-10 80 90 50M960 950l80 20 40-60M1000 1140l60 40 100-20M1020 1140l-20 60 80 60M1060 1130l60 50M1140 1130l-80 120M1190 1170l-50 80M560 1040l60 100M420 1180l80 60M400 1200l70 90M440 1360l40 80h60l10-60M300 1300l60 60 60-30M240 1360l40 40 80 20M330 1410l-60 80M600 1420l-20 60h60M820 1260l60 130M870 1330l120 80M900 1400l60-40 70 70M980 1330l60 80 60-60M1050 1400l20 140M1100 1320l60 80-20 100M1200 1290l-40 90 50 130M930 1420l-20 140M1010 1450l-10 118M840 1500l60 30M620 1330l60 60M700 1420l-40 80M160 640l140 20M200 600l60 60-20 60M320 560l-20 90M230 720l80 60M0 760l60-30M30 800l90-20M330 340l-20 80 60 60M0 340l60 20M60 300l-20 90 80 20M120 560l40-60",
    street: "M0 640l90 80M20 660l-20 60M30 600l60 120M60 600l70 90M80 560l60 80M0 700l110 20M60 740l70 60M150 660l60 30M200 500l60 60M250 560l60-60M290 500l50 60M340 450l60 80M400 520l50 60M350 560l60 60M440 470l60 50M490 440l-60 30M580 460l60 40M600 520l60 30M560 700l60 50M590 690l-20 60M640 600l40 60M740 540l60 60M790 640l70 40M830 600l20 80M830 440l50-20M770 460l60 60M470 300l40 60M560 290l60 40M590 350l70 30M390 310l60 40M200 290l50 60M150 300l20 60M960 740l20 100M1060 750l40 110M1120 830l60 60M1170 770l80 30M1210 720l20 110M1050 900l80-10M1180 900l60 40M930 860l-10 60M890 1000l60 60M960 1080l60 20M620 870l60 30M610 960l60 40M720 900l40 40M580 1080l80 40M660 1110l60 40M730 1080l-30 60M340 1180l60 60M130 1160l-40 60M260 1250l50 30M370 1200l20 90M420 1300l60 60M480 1330l60 50M520 1310l-60 80M600 1280l80 60M820 1300l40 60M920 1280l70 60M1030 1240l60 80M1120 1230l60 60M1200 1240l-30 90M1010 1360l60 60M1090 1420l80 40M1110 1480l100 30M880 1430l-20 80M960 1470l60 60M640 1500l60 50M340 1480l60 60M100 1430l60 50M40 1450l50 60M200 1420l40 50M150 1340l60 40",
    yellow: "M533 276l2 120 25 60-20 60-60 60M540 392l100 8 100 40 60-5 80-32M905 312l130-7 25-25M1040 310l45 350M702 430l158 320-10 90M985 720l95 220M900 870l140 12 229-75M0 605l50 15 40 60 50 60-20 60-40 40M300 365l120 125 100 115 120-105 62-60M160 568l130-5 130-75 80-40M430 690l170 65 70 40M780 1280l80-28 50 150-10 166M860 1252l-30-90M1130 1300l139-80M1130 1300l40 80M200 1140l20 60-10 90h70M300 1120l40 170 100 150 80 120M200 1490h250M440 1440l-110 128M60 858h220M430 360l-40-84M200 770l80 20 20 60M1150 830l30 70M80 276l-10 80 40 60M100 1300l-40 60-60 30M900 1540l170-20M700 1568l60-80M640 790l-10 60M150 560l-60 40",
    orange: "M25 276l8 70-33 100M0 527l80 18 70 35 50 45 10 80-20 90M420 276l-60 84-70 70-110 60-40 80M140 570l30-60-80-40-90 10M560 855l140-50 160-55 140-45 269-90M915 276v364l-10 160-50 55-10-10M850 850l50 50 130 110 120 110 119 100M560 1030l140 40 160 25 100 35 140 80 169 75M560 1060l80 120-40 40-60 30-160 70-220 160-160 20M530 1220l170 70 60 60 30 218M540 1250l100 20 120 120 140 20 150 40 219 50M310 1120l230 110M250 1130l10 150 20 120 10 168M480 580v110M520 830l40 60M0 1480l190 10M915 640l40 70M470 760l80 95",
    rail: "M90 276l230 74 60 30 160 15q60 15 100 75l60 120q20 80-20 150 0 90 70 108l110 52q150 60 168 150-8 80-88 100l-160 40H650l-130 70-200 110-120 110-70 88M700 590l70 120 80 170 110 90 110 80 199 140M885 276l5 244 15 120 5 100M840 880l-40 120-30 80-30 70-120 70M1269 990l-189 50q-180 70-310 30l-210-40M410 1185l70-15 80 10 60-10M620 1220q-60 40-30 80 50 10 110 10l70 80 5 178M600 1330q-50 40-40 90l120 30 80 118M110 276l60 154 80 70 130-90M140 276l40 160 60 60M240 690v70l60 70 100 26M75 1120l15 80 5 90-95 100M245 1120l15 90 70 30M205 510l100-60 60-80M210 500l-30-60",
    olive: "M700 430l155 320M520 600l150 100v90l-40 5-200-120-20 60-40 100M520 600l180-150M560 855l140-50 160-60 140-45M1000 320h30M0 530l40-20M330 650l80 10 10-40",
    dashed: "M480 440l60-50 100-10 240-50M600 440l-20 60 10 90 60 60 60 80M660 960l10 60-20 30 40 100 60 20M700 850l-40 60v60M920 740l80-20 40 70 10 60 60 20M130 1200l40 60 20 110 40 80M1160 1160l60 20 49 5M10 742h180M220 560l40 80 20 90M870 1100l60 30 100 60",
    labels: [
        [479, 66, "Красносельский"], [682, 79, "Соколиная"], [682, 91, "Гора"], [520, 114, "Басманный"], [612, 161, "Лефортово"],
        [791, 214, "Перово"], [642, 287, "Нижегородский"], [779, 324, "Рязанский"], [538, 360, "Южнопортовый"],
        [526, 396, "Кожухово"], [706, 412, "Текстильщики"], [451, 394, "Даниловский"],
    ],
};

const greenLabels = [
    [158, 400, "Московский"], [158, 411, "государственный"], [158, 422, "университет"], [158, 433, "им. М. В. Ломоносова"],
    [748, 84, "ПКиО Измайлово"], [817, 72, "Измайловский"], [822, 86, "лесопарк"], [848, 264, "Лесопарк"], [848, 275, "«Кусково»"],
];

const stations = [
    [119, 113], [222, 87], [279, 71], [113, 217], [240, 227], [2, 281], [314, 414], [524, 24], [478, 56], [494, 77],
    [719, 130], [626, 206], [685, 231], [768, 256], [677, 267], [680, 310], [582, 302], [451, 341], [772, 363],
];

const MapSheet = ({ sheet, transform }) => (
    <g transform={transform} fill="none" strokeLinejoin="round">
        {sheet.areas.map(([color, d]) => <path key={color} d={d} fill={color} />)}
        <path d={sheet.banks} stroke="#b5d9a8" strokeWidth="36" strokeOpacity=".6" />
        <path d={sheet.street} stroke="#bfbfbf" strokeWidth="2" />
        <path d={sheet.minor} stroke="#c4c4c4" strokeWidth="7" />
        <path d={sheet.minor} stroke="#ffffff" strokeWidth="5" />
        <path d={sheet.streams} stroke="#aad3df" strokeWidth="5" />
        <path d={sheet.river} stroke="#a2cad6" strokeWidth="14" />
        <path d={sheet.banks} stroke="#a2cad6" strokeWidth="21" />
        <path d={sheet.banks} stroke="#8794b8" strokeWidth="3" strokeDasharray="22 8" />
        <path d={sheet.dashed} stroke="#9a9a9a" strokeWidth="5" strokeDasharray="12 7" />
        <path d={sheet.yellow} stroke="#cfd193" strokeWidth="12" />
        <path d={sheet.yellow} stroke="#f5f7b5" strokeWidth="9" />
        <path d={sheet.orange} stroke="#e5b178" strokeWidth="13" />
        <path d={sheet.orange} stroke="#fbcd9b" strokeWidth="10" />
        <path d={sheet.rail} stroke="#87838a" strokeWidth="5" />
        {sheet.olive && <path d={sheet.olive} stroke="#8f8f58" strokeWidth="4" />}
    </g>
);

const CityMap = () => (
    <MapSvg viewBox="0 0 841 435" preserveAspectRatio="xMinYMin slice">
        <defs>
            <pattern id="streets" width="83" height="71" patternUnits="userSpaceOnUse">
                <path
                    d="M0 12l24 8 30-14 29 6M10 71l14-51 6-20M54 6l6 30-8 35M0 44l19-4 38 6 26-2M30 20l12 22M62 30l21-8M38 43l-6 28M70 45l4 26M8 16l-8 16M44 10l14 18M66 9l4 18M24 55l28 4"
                    fill="none"
                    stroke="#c3c3c3"
                />
            </pattern>
            <pattern id="yards" width="157" height="131" patternUnits="userSpaceOnUse">
                <path d="M12 20l9-4 4 8-9 3zM70 8l6 2-3 9-6-2zM120 40l12 4-5 7-9-3zM40 70l5-9 7 4-6 9zM96 90l11-3 2 7-10 4zM20 112l7 2-2 8-8-3zM140 104l5-7 6 5-5 8z" fill="#b6dca8" />
                <path d="M50 30l8 3-3 5-7-3zM100 18l7-4 4 6-7 3zM10 62l8-2 1 6-8 2zM70 110l9 3-4 6-7-3zM132 74l8 2-2 6-8-2z" fill="#d0cdb9" />
                <path d="M84 52l8 4-4 8-8-4zM34 96l8-3 3 6-8 4z" fill="#efeae2" />
            </pattern>
        </defs>
        <path d="M0 0h841v435H0z" fill="#dcdcdc" />
        <path d="M0 0h841v435H0z" fill="url(#streets)" />
        <path d="M0 0h841v435H0z" fill="url(#yards)" />
        <clipPath id="west-sheet"><path d="M0 0h424v435H0z" /></clipPath>
        <g clipPath="url(#west-sheet)">
            <MapSheet sheet={west} transform="translate(-1 -43) scale(.3333)" />
        </g>
        <clipPath id="east-sheet"><path d="M424 0h417v435H424z" /></clipPath>
        <g clipPath="url(#east-sheet)">
            <MapSheet sheet={east} transform="translate(419 -93) scale(.3333 .3374)" />
            <path
                d="M702 203l-22 22-14 46 5 36 8 35-4 35v50"
                fill="none"
                stroke="#f9c58f"
                strokeWidth="2"
                strokeDasharray="3 2"
            />
        </g>
        <ellipse cx="238" cy="60" rx="7" ry="14" fill="#aee0c4" stroke="#8ccaa6" transform="rotate(18 238 60)" />
        <circle cx="216" cy="350" r="6" fill="#cdebe0" stroke="#9ccfb6" strokeWidth="2" />
        <path d="M184 376l24-12M196 372l-3 12" stroke="#555555" />
        <g fill="#111111">
            <circle cx="205" cy="364" r="2" />
            <circle cx="197" cy="373" r="2" />
            <circle cx="193" cy="384" r="2" />
        </g>
        <g fill="#4a59a8">
            {stations.map(([x, y]) => (
                <rect key={`${x}-${y}`} x={x - 2} y={y - 2} width="4" height="4" />
            ))}
        </g>

        <g textAnchor="middle" fontSize="10" fontWeight="500" fill="#454545" stroke="#ffffff" strokeOpacity=".6" strokeWidth="2" paintOrder="stroke">
            {[...west.labels, ...east.labels].map(([x, y, name]) => (
                <text key={name} x={x} y={y}>{name}</text>
            ))}
            <text x="383" y="193" fontSize="13">Москва</text>
            {greenLabels.map(([x, y, name]) => (
                <text key={name} x={x} y={y} fontSize="9" fontStyle="italic" fill={x < 200 ? "#6d7240" : "#3f8a50"}>{name}</text>
            ))}
        </g>

        <g fill="none" stroke="#3762e3" strokeWidth="3" strokeLinejoin="round">
            <path d="M680 37h-84l10 26-17 20-19 23-12 33-10 8h-23l-7 10 8 21-12 16-10-6-6-5h-20M482 190v8" />
        </g>
        <g fill="#0a3cff">
            <path d="M677 33l15 6-5 7zM582 91l5-19 3 8 8-1zM509 197l10-7-1 9z" />
        </g>

        <path d="M627 10h29v29h-10l-4 5-4-5h-11zM286 192h29v29h-29z" fill="#ff6a00" />
        <circle cx="641" cy="24" r="10" fill="#ffffff" />
        <circle cx="300" cy="206" r="10" fill="#ffffff" />
        <g fontFamily="Roboto Condensed" fontSize="12" fontWeight="500" fill="#ff6a00" textAnchor="middle">
            <text x="641" y="28">5</text>
            <text x="300" y="210">4</text>
        </g>
        <path d="M302 244l-3-12" stroke="#3762e3" strokeWidth="2" />
        <path d="M288 221c-5 8 1 15 10 15" fill="none" stroke="#f0284c" strokeWidth="2" />
        <path d="M290 222l8 12" stroke="#2a4fe0" strokeWidth="4" />
        <circle cx="307" cy="225" r="12" fill="#0a3cff" />
        <circle cx="307" cy="225" r="10" fill="none" stroke="#ffffff" />
        <path d="M302 225l1.500-4.500h7l1.500 4.500v5h-2v-1.500h-6v1.500h-2z" fill="#ffffff" />
        <path d="M304.500 222.500h5l.5 2h-6zM303.500 226h1.500v1h-1.500zM309 226h1.500v1H309z" fill="#0a3cff" />
    </MapSvg>
);

const TrackMap = () => (
    <Widget>
        <WidgetHeader $height={34} $padding="0 9px 0 29px">
            <TitleBlock>
                <TitleLine $gap={10}>
                    <WidgetName>Трек</WidgetName>
                    <span>VW Polo в304вм799 Баракин И.А.</span>
                </TitleLine>
                <Interval>03.10.2022 10:28 +03:00 - 03.10.2022 12:28 +03:00</Interval>
            </TitleBlock>
            <WidgetTools>
                <DottedLink $small href="#map">OSM карта</DottedLink>
                <button aria-label="Развернуть"><ExpandIcon /></button>
                <button aria-label="Закрыть"><CloseIcon /></button>
            </WidgetTools>
        </WidgetHeader>

        <MapArea>
            <CityMap />
            <MapButton $left="11px" aria-label="Воспроизвести трек">
                <svg width="8" height="12" viewBox="0 0 8 12" fill="currentColor"><path d="M0 0l8 6-8 6z" /></svg>
            </MapButton>
            <MapButton $right="10px" $alpha={0.75} aria-label="Поиск на карте"><SearchIcon /></MapButton>
            <ZoomControl>
                <button aria-label="Приблизить">
                    <svg width="12" height="12" viewBox="0 0 12 12" stroke="currentColor" strokeWidth="2"><path d="M6 0v12M0 6h12" /></svg>
                </button>
                <button aria-label="Отдалить">
                    <svg width="12" height="12" viewBox="0 0 12 12" stroke="currentColor" strokeWidth="2"><path d="M0 6h12" /></svg>
                </button>
            </ZoomControl>
            <MapScale>2 km</MapScale>
            <Coordinates>55.75987 : 37.47108</Coordinates>
            <VehicleTag>VW Polo<br />в304вм799<br />Баракин<br />И.А.</VehicleTag>
            <Popup>
                <PopupHead><span>Скорость</span><span>0 км/ч</span></PopupHead>
                <p>22/14, Смоленский бульвар, район Арбат,</p>
                <p>Центральный административный округ, Москва,</p>
                <p>Центральный федеральный округ, 123317, Россия</p>
            </Popup>
        </MapArea>
    </Widget>
);

export default function App() {
    return (
        <>
            <GlobalStyle />
            <Page>
                <SidePanel />
                <Main>
                    <DesktopTabs />
                    <Workspace>
                        <FailuresTable />
                        <BottomRow>
                            <FuelChart />
                            <TrackMap />
                        </BottomRow>
                    </Workspace>
                </Main>
            </Page>
        </>
    );
}
